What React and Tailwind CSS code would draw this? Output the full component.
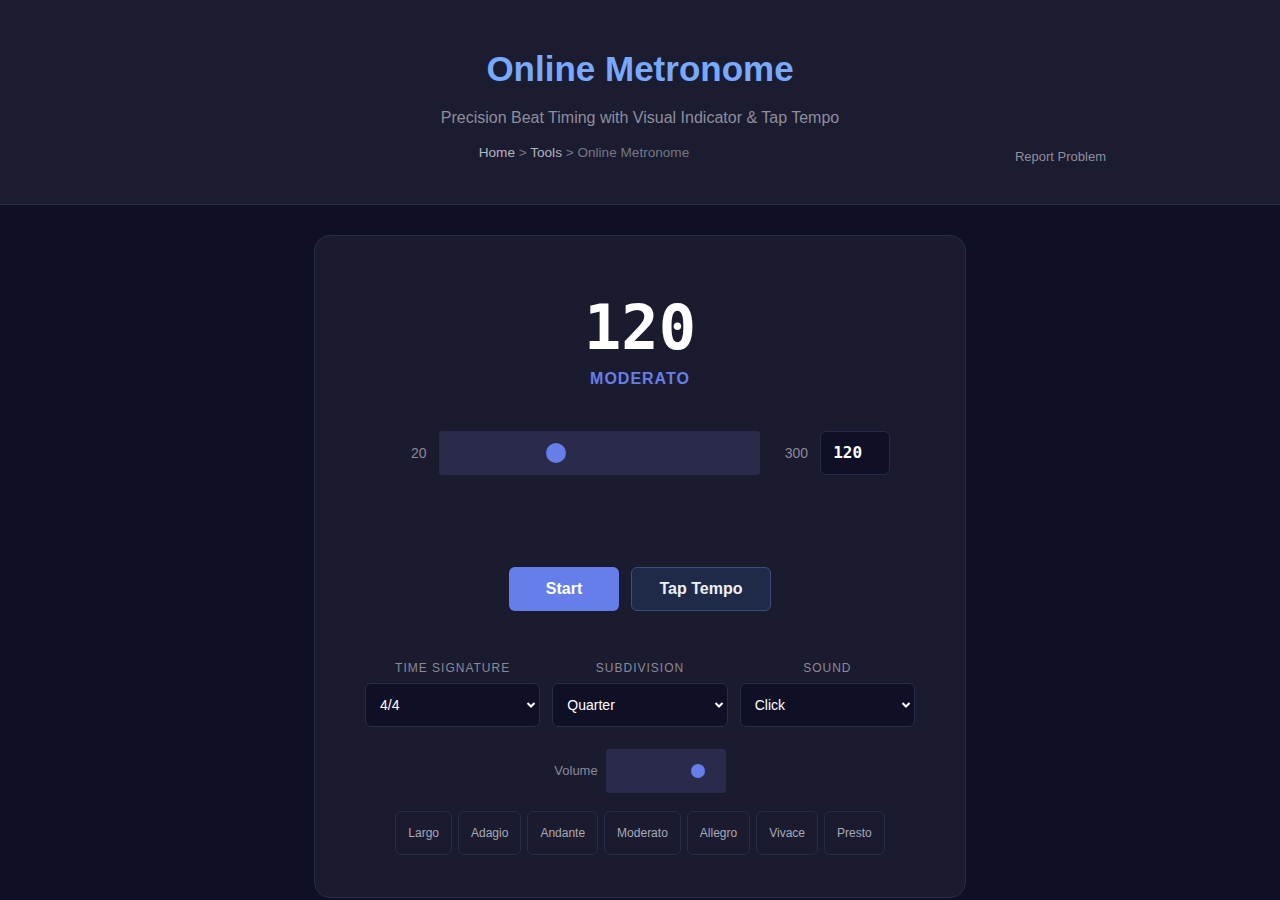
import { useState } from 'react';

const tempos = ['Largo', 'Adagio', 'Andante', 'Moderato', 'Allegro', 'Vivace', 'Presto'];

function Chevron() {
  return (
    <svg className="pointer-events-none absolute right-[4px] top-1/2 -translate-y-1/2" width="10" height="6" viewBox="0 0 10 6">
      <path d="M1.5 1l3.5 3.5L8.5 1" fill="none" stroke="#ffffff" strokeWidth="2" />
    </svg>
  );
}

function Select({ label, value }) {
  return (
    <div className="flex flex-col items-center gap-[7px]">
      <span className="text-[12px] leading-[16px] uppercase tracking-[1px] text-[#8a8a99]">{label}</span>
      <div className="relative w-full">
        <div className="h-[44px] w-full rounded-[6px] border border-[#2a2b48] bg-[#0f1026] pl-[14px] flex items-center text-[14px] text-white">
          {value}
        </div>
        <Chevron />
      </div>
    </div>
  );
}

export default function App() {
  const [bpm] = useState(120);
  const pct = (bpm - 20) / 280;

  return (
    <div className="min-h-[900px] bg-[#0f1025] font-['Liberation_Sans',Arial,sans-serif]">
      {/* Header */}
      <header className="h-[205px] bg-[#1b1c30] border-b border-[#2b2c48] pt-[47px]">
        <h1 className="text-center text-[35px] leading-[43px] font-bold text-[#78a9ff]">Online Metronome</h1>
        <p className="mt-[18px] text-center text-[16px] leading-[20px] text-[#8e8e9c]">
          Precision Beat Timing with Visual Indicator &amp; Tap Tempo
        </p>
        <div className="mt-[16px] flex items-start pl-[153px] pr-[174px]">
          <div className="flex-1 text-center text-[13.6px] leading-[18px]">
            <span className="text-[#b5b5c0]">Home</span>
            <span className="text-[#777784]"> &gt; </span>
            <span className="text-[#b5b5c0]">Tools</span>
            <span className="text-[#777784]"> &gt; Online Metronome</span>
          </div>
          <span className="mt-[4px] text-[13px] leading-[18px] text-[#8e8e9c]">Report Problem</span>
        </div>
      </header>

      {/* Card */}
      <main className="pt-[30px]">
        <div className="mx-auto w-[652px] rounded-[16px] border border-[#2a2b48] bg-[#1a1b2f] px-[50px] pt-[60px] pb-[42px]">
          <div className="text-center font-['DejaVu_Sans_Mono',monospace] text-[62px] leading-[64px] font-bold text-white">{bpm}</div>
          <div className="mt-[8px] text-center text-[16px] leading-[22px] font-bold tracking-[1px] text-[#667eea]">MODERATO</div>

          {/* BPM slider */}
          <div className="mt-[41px] flex items-center pl-[46px] pr-[25px]">
            <span className="text-[14px] text-[#8a8a99]">20</span>
            <div className="relative ml-[12px] h-[44px] w-[322px] rounded-[3px] bg-[#2a2a4a]">
              <div
                className="absolute top-1/2 h-[20px] w-[20px] -translate-y-1/2 rounded-full bg-[#667eea]"
                style={{ left: `${pct * 302}px` }}
              />
            </div>
            <span className="ml-[25px] text-[14px] text-[#8a8a99]">300</span>
            <div className="ml-[12px] flex h-[44px] w-[70px] items-center rounded-[6px] border border-[#2a2b48] bg-[#0f1026] pl-[12px] font-['DejaVu_Sans_Mono',monospace] text-[16px] font-bold text-white">
              {bpm}
            </div>
          </div>

          {/* Controls */}
          <div className="mt-[92px] flex justify-center gap-[12px]">
            <button className="h-[44px] w-[110px] rounded-[6px] bg-[#667eea] text-[16px] font-bold text-white">Start</button>
            <button className="h-[44px] w-[140px] rounded-[6px] border border-[#35507e] bg-[#1f2a48] text-[16px] font-bold text-[#eef0f6]">Tap Tempo</button>
          </div>

          <div className="mt-[49px] grid grid-cols-3 gap-[12px]">
            <Select label="Time Signature" value="4/4" />
            <Select label="Subdivision" value="Quarter" />
            <Select label="Sound" value="Click" />
          </div>

          {/* Volume */}
          <div className="mt-[22px] flex items-center justify-center gap-[8px]">
            <span className="text-[13px] text-[#8a8a99]">Volume</span>
            <div className="relative h-[44px] w-[120px] rounded-[3px] bg-[#2a2a4a]">
              <div className="absolute right-[21px] top-1/2 h-[14px] w-[14px] -translate-y-1/2 rounded-full bg-[#667eea]" />
            </div>
          </div>

          {/* Tempo presets */}
          <div className="mt-[18px] flex justify-center gap-[6px]">
            {tempos.map((t) => (
              <button
                key={t}
                className="h-[44px] rounded-[6px] border border-[#2a2b48] bg-[#1a1b2f] px-[12px] text-[12px] text-[#a9a9b8]"
              >
                {t}
              </button>
            ))}
          </div>
        </div>
      </main>
    </div>
  );
}
